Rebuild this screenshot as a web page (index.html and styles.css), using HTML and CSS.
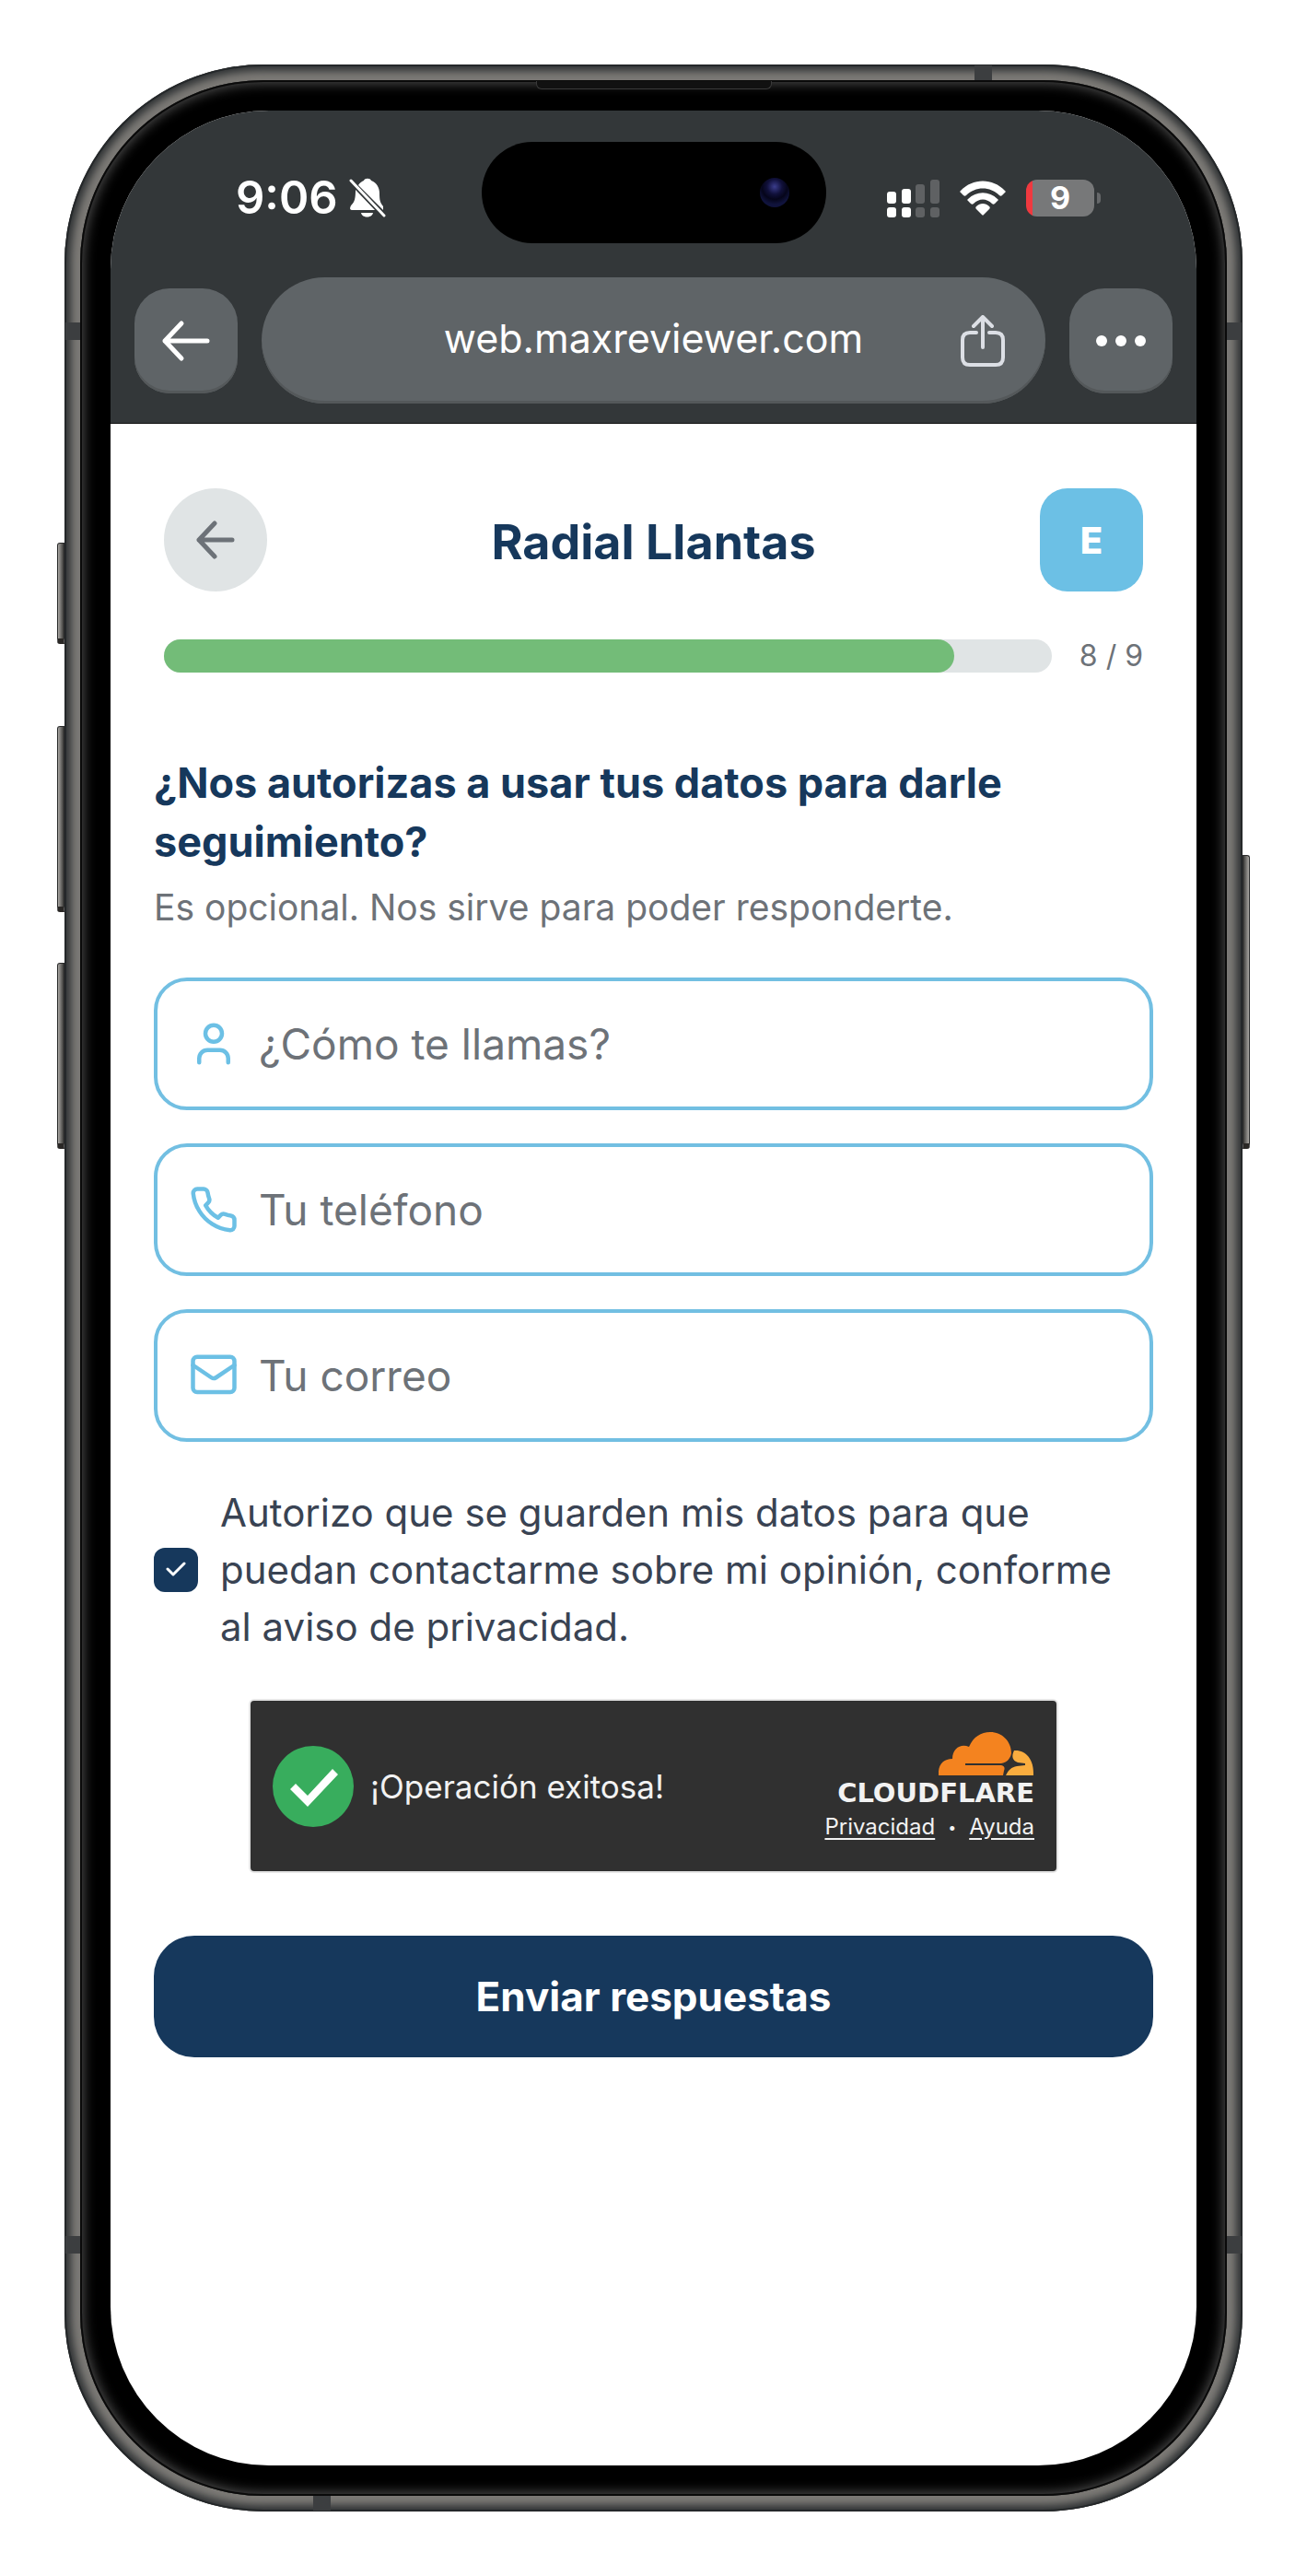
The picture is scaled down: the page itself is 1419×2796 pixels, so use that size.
FILE: index.html
```html
<!DOCTYPE html>
<html lang="es">
<head>
  <meta charset="UTF-8" />
  <meta name="viewport" content="width=device-width, initial-scale=1.0"/>
  <title>Radial Llantas</title>
  <link rel="stylesheet" href="styles.css">
</head>
<body>

  <div class="phone">

    <!-- Side buttons and antenna bands -->
    <span class="key key-action"></span>
    <span class="key key-up"></span>
    <span class="key key-down"></span>
    <span class="key key-power"></span>
    <span class="band band-top"></span>
    <span class="band band-bottom"></span>
    <span class="band band-left"></span>
    <span class="band band-right"></span>
    <span class="band band-left band-low"></span>
    <span class="band band-right band-low"></span>

    <div class="bezel">
      <span class="speaker"></span>

      <div class="screen">

        <div class="browser">

          <div class="status-bar">
            <div class="status-left">
              <span class="time">9:06</span>
              <svg width="40" height="44" viewBox="0 0 40 44" fill="#fff">
                <path d="M10 8 C12 5 14 4 16 3 C17 0 23 0 24 3 C30 5 33 11 33 17 C33 25 34 27 37 31 V35 Z"/>
                <path d="M7 13 L28 35 H3 C0 35 1 31 3 29 C6 26 7 22 7 13 Z"/>
                <path d="M13 38 H26 C25 44 14 44 13 38 Z"/>
                <path d="M2 3 L38 41" stroke="#fff" stroke-width="3" stroke-linecap="round"/>
              </svg>
            </div>

            <div class="island"><span class="camera"></span></div>

            <div class="status-right">
              <svg width="57" height="41" viewBox="0 0 57 41" fill="#fff">
                <rect x="0" y="13" width="10" height="13" rx="3"/>
                <rect x="16" y="10" width="10" height="16" rx="3"/>
                <rect x="31" y="5" width="10" height="21" rx="3" fill="#5f6163"/>
                <rect x="47" y="0" width="10" height="26" rx="3" fill="#5f6163"/>
                <rect x="0" y="30" width="10" height="11" rx="3"/>
                <rect x="16" y="30" width="10" height="11" rx="3"/>
                <rect x="31" y="30" width="10" height="11" rx="3" fill="#5f6163"/>
                <rect x="47" y="30" width="10" height="11" rx="3" fill="#5f6163"/>
              </svg>
              <svg width="50" height="38" viewBox="0 0 50 38" fill="#fff">
                <path d="M1 11 C14 -3 36 -3 49 11 C50 12 50 12 49 13 L46 16 C45 17 44 17 43 16 C33 6 17 6 7 16 C6 17 5 17 4 16 L1 13 C0 12 0 12 1 11 Z"/>
                <path d="M9 20 C18 11 32 11 41 20 C42 21 42 21 41 22 L38 25 C37 26 36 26 35 25 C29 19 21 19 15 25 C14 26 13 26 12 25 L9 22 C8 21 8 21 9 20 Z"/>
                <path d="M18 28 C22 24 28 24 32 28 C33 29 33 30 32 31 L26 37 C25 38 25 38 24 37 L18 31 C17 30 17 29 18 28 Z"/>
              </svg>
              <div class="battery"><span>9</span></div>
            </div>
          </div>

          <div class="toolbar">
            <button class="tool-btn" aria-label="Atrás">
              <svg width="54" height="46" viewBox="0 0 54 46" fill="none" stroke="#fff" stroke-width="5" stroke-linecap="round" stroke-linejoin="round">
                <path d="M22 4 L4 23 L22 42 M4 23 H50"/>
              </svg>
            </button>
            <div class="address">
              <input type="text" value="web.maxreviewer.com" aria-label="Dirección">
              <button class="share" aria-label="Compartir">
                <svg width="48" height="56" viewBox="0 0 48 56" fill="none" stroke="#dcdfe5" stroke-width="4" stroke-linecap="round" stroke-linejoin="round">
                  <path d="M17 19 H10 Q2 19 2 27 V46 Q2 54 10 54 H38 Q46 54 46 46 V27 Q46 19 38 19 H31"/>
                  <path d="M24 35 V2 M14 12 L24 2 L34 12"/>
                </svg>
              </button>
            </div>
            <button class="tool-btn" aria-label="Más">
              <svg width="54" height="12" viewBox="0 0 54 12" fill="#fff">
                <circle cx="6" cy="6" r="6"/>
                <circle cx="27" cy="6" r="6"/>
                <circle cx="48" cy="6" r="6"/>
              </svg>
            </button>
          </div>

        </div>

        <main class="survey">

          <header class="survey-header">
            <button class="back-btn" aria-label="Volver">
              <svg width="44" height="42" viewBox="0 0 44 42" fill="none" stroke="#6d7278" stroke-width="5" stroke-linecap="round" stroke-linejoin="round">
                <path d="M21 3 L4 21 L21 39 M4 21 H40"/>
              </svg>
            </button>
            <h1>Radial Llantas</h1>
            <span class="badge">E</span>
          </header>

          <div class="progress-row">
            <div class="progress"><div class="progress-fill" style="width: 89%"></div></div>
            <span>8 / 9</span>
          </div>

          <form>
            <h2>¿Nos autorizas a usar tus datos para darle seguimiento?</h2>
            <p class="hint">Es opcional. Nos sirve para poder responderte.</p>

            <div class="fields">
              <label class="field">
                <svg class="icon" viewBox="0 0 24 24">
                  <circle cx="12" cy="7" r="4"/>
                  <path d="M19 21v-2a4 4 0 0 0-4-4H9a4 4 0 0 0-4 4v2"/>
                </svg>
                <input type="text" placeholder="¿Cómo te llamas?" aria-label="Nombre">
              </label>
              <label class="field">
                <svg class="icon" viewBox="0 0 24 24">
                  <path d="M22 16.92v3a2 2 0 0 1-2.18 2 19.79 19.79 0 0 1-8.63-3.07 19.5 19.5 0 0 1-6-6 19.79 19.79 0 0 1-3.07-8.67A2 2 0 0 1 4.11 2h3a2 2 0 0 1 2 1.72 12.84 12.84 0 0 0 .7 2.81 2 2 0 0 1-.45 2.11L8.09 9.91a16 16 0 0 0 6 6l1.27-1.27a2 2 0 0 1 2.11-.45 12.84 12.84 0 0 0 2.81.7A2 2 0 0 1 22 16.92z"/>
                </svg>
                <input type="tel" placeholder="Tu teléfono" aria-label="Teléfono">
              </label>
              <label class="field">
                <svg class="icon" viewBox="0 0 24 24">
                  <rect x="2" y="3" width="20" height="17" rx="2"/>
                  <path d="M2 7l8.9 6a2 2 0 0 0 2.2 0L22 7"/>
                </svg>
                <input type="email" placeholder="Tu correo" aria-label="Correo">
              </label>
            </div>

            <div class="consent">
              <div class="check">
                <input type="checkbox" id="consent" checked>
                <svg width="22" height="16" viewBox="0 0 22 16" fill="none" stroke="#fff" stroke-width="3" stroke-linecap="round" stroke-linejoin="round">
                  <path d="M2 8 L8 14 L20 2"/>
                </svg>
              </div>
              <label for="consent">Autorizo que se guarden mis datos para que puedan contactarme sobre mi opinión, conforme al aviso de privacidad.</label>
            </div>

            <div class="captcha">
              <svg width="88" height="88" viewBox="0 0 88 88">
                <circle cx="44" cy="44" r="44" fill="#38ad5d"/>
                <path d="M65 25 L71 31 L38 66 L19 47 L25 41 L38 54 Z" fill="#fff"/>
              </svg>
              <span class="captcha-text">¡Operación exitosa!</span>
              <div class="captcha-brand">
                <svg width="104" height="48" viewBox="0 0 104 48">
                  <path fill="#f4831f" d="M0 47 C-1 36 5 29 15 29 C15 17 25 12 33 16 C38 5 46 0 56 0 C69 0 79 10 79 23 C78 29 74 33 68 34 H29 V36 H68 Q73 37 71 42 L70 47 Z"/>
                  <path fill="#faad3f" d="M82 20 C94 19 104 29 103 47 H73 C76 41 79 38 85 37 L94 36 V34 L86 33 C80 31 79 26 82 20 Z"/>
                </svg>
                <span class="wordmark">CLOUDFLARE</span>
                <div class="captcha-links">
                  <a href="#">Privacidad</a><span>•</span><a href="#">Ayuda</a>
                </div>
              </div>
            </div>

            <button type="submit" class="submit-btn">Enviar respuestas</button>
          </form>

        </main>

      </div>
    </div>
  </div>

</body>
</html>
```
FILE: styles.css
```css
* {
  margin: 0;
  padding: 0;
  box-sizing: border-box;
}

body {
  display: flex;
  min-height: 100vh;
  padding: 70px;
  font-family: Inter, sans-serif;
  background-color: #fff;
}

button,
input {
  font-family: inherit;
  border: none;
  background: none;
}

svg {
  display: block;
  flex-shrink: 0;
}

/* Phone body */

.phone {
  position: relative;
  display: flex;
  flex: 1;
  min-width: 0;
  padding: 17px;
  border-radius: 216px;
  background-color: #7c7a76;
  box-shadow: inset 0 0 0 2px #25282a, inset 0 0 8px 7px #303335;
}

.bezel {
  position: relative;
  display: flex;
  flex: 1;
  min-width: 0;
  padding: 33px;
  border-radius: 199px;
  background-color: #000;
  box-shadow: inset 0 0 0 2px #0a0a0a, inset 0 0 14px 3px #555;
}

.screen {
  flex: 1;
  min-width: 0;
  overflow: hidden;
  border-radius: 172px;
  background-color: #fff;
}

.key {
  position: absolute;
  left: -8px;
  width: 8px;
  border: 1px solid #2a2b2b;
  border-bottom: 6px solid #2a2826;
  border-radius: 3px 0 0 3px;
  background: linear-gradient(to right, #aaa8a4, #3c3b39);
}

.key-action {
  top: 519px;
  height: 110px;
}

.key-up {
  top: 718px;
  height: 202px;
}

.key-down {
  top: 975px;
  height: 202px;
}

.key-power {
  top: 858px;
  left: auto;
  right: -8px;
  height: 319px;
  border-radius: 0 3px 3px 0;
  background: linear-gradient(to left, #aaa8a4, #3c3b39);
}

.band {
  position: absolute;
  width: 16px;
  height: 19px;
  background-color: #3c3e40;
}

.band-left {
  top: 280px;
  left: 1px;
}

.band-right {
  top: 280px;
  right: 1px;
}

.band-low {
  top: auto;
  bottom: 280px;
}

.band-top {
  top: 1px;
  right: 272px;
  width: 19px;
  height: 16px;
}

.band-bottom {
  bottom: 1px;
  left: 270px;
  width: 19px;
  height: 16px;
}

.speaker {
  position: absolute;
  top: 1px;
  left: 50%;
  width: 256px;
  height: 9px;
  margin-left: -128px;
  border: 1px solid #3a3a3a;
  border-top: none;
  border-radius: 0 0 6px 6px;
  background-color: #111;
}

/* Browser chrome */

.browser {
  padding: 34px 26px 21px;
  color: #fff;
  background-color: #333739;
  border-bottom: 1px solid #111;
}

.status-bar {
  display: grid;
  grid-template-columns: 1fr auto 1fr;
  align-items: center;
}

.status-left,
.status-right {
  display: flex;
  align-items: center;
  padding-top: 12px;
}

.status-left {
  gap: 12px;
  padding-left: 110px;
}

.status-right {
  justify-content: flex-end;
  gap: 22px;
  padding-right: 78px;
}

.time {
  font-size: 49px;
  font-weight: 600;
  line-height: 44px;
}

.island {
  display: flex;
  align-items: center;
  justify-content: flex-end;
  width: 374px;
  height: 110px;
  padding-right: 40px;
  border-radius: 55px;
  background-color: #000;
}

.camera {
  width: 32px;
  height: 32px;
  border-radius: 50%;
  background: radial-gradient(circle at 50% 30%, #3b3d8c 0, #10103a 30%, #05051a 50%, #10133c 70%);
}

.battery {
  position: relative;
  width: 74px;
  height: 40px;
  margin-right: 7px;
  border-radius: 12px;
  font-size: 34px;
  font-weight: 700;
  line-height: 40px;
  text-align: center;
  background: linear-gradient(to right, #f0393f 7px, #777879 7px);
}

.battery::after {
  content: "";
  position: absolute;
  top: 14px;
  right: -7px;
  width: 4px;
  height: 12px;
  border-radius: 0 4px 4px 0;
  background-color: #66686a;
}

.toolbar {
  display: flex;
  align-items: center;
  gap: 26px;
  margin-top: 37px;
}

.tool-btn {
  display: flex;
  align-items: center;
  justify-content: center;
  width: 112px;
  height: 114px;
  border-radius: 38px;
  background-color: #5f6467;
  box-shadow: inset 0 -3px 0 #54585a;
}

.address {
  display: flex;
  flex: 1;
  align-items: center;
  min-width: 0;
  height: 137px;
  padding: 0 44px 0 92px;
  border-radius: 69px;
  background-color: #5f6467;
  box-shadow: inset 0 -3px 0 #54585a;
}

.address input {
  flex: 1;
  min-width: 0;
  padding-bottom: 6px;
  font-size: 43px;
  text-align: center;
  color: #fff;
}

/* Survey */

.survey {
  padding: 70px 47px;
  color: #16385c;
}

.survey-header {
  display: flex;
  align-items: center;
  justify-content: space-between;
  padding: 0 11px;
}

.survey-header h1 {
  padding-top: 4px;
  font-size: 52px;
  font-weight: 700;
}

.back-btn,
.badge {
  display: flex;
  align-items: center;
  justify-content: center;
  width: 112px;
  height: 112px;
}

.back-btn {
  border-radius: 50%;
  background-color: #e0e4e5;
}

.badge {
  border-radius: 30px;
  font-size: 40px;
  font-weight: 800;
  color: #fff;
  background-color: #6cc0e5;
}

.progress-row {
  display: flex;
  align-items: center;
  gap: 30px;
  margin-top: 52px;
  padding: 0 11px;
  font-size: 32px;
  line-height: 36px;
  color: #6d7278;
}

.progress {
  flex: 1;
  height: 36px;
  border-radius: 18px;
  background-color: #e0e4e5;
}

.progress-fill {
  height: 100%;
  border-radius: 18px;
  background-color: #73bc78;
}

form h2 {
  margin-top: 88px;
  font-size: 45px;
  font-weight: 700;
  line-height: 64px;
}

.hint {
  margin-top: 11px;
  font-size: 39px;
  line-height: 56px;
  color: #6d7278;
}

.fields {
  display: flex;
  flex-direction: column;
  gap: 36px;
  margin-top: 48px;
}

.field {
  display: flex;
  align-items: center;
  gap: 22px;
  height: 144px;
  padding: 0 34px;
  border: 4px solid #72bfe2;
  border-radius: 36px;
}

.icon {
  width: 54px;
  height: 54px;
  fill: none;
  stroke: #6cc0e5;
  stroke-width: 2;
  stroke-linecap: round;
  stroke-linejoin: round;
}

.field input {
  flex: 1;
  min-width: 0;
  font-size: 46px;
  color: #394353;
  outline: none;
}

.field input::placeholder {
  color: #6d7278;
}

.consent {
  display: flex;
  align-items: center;
  gap: 24px;
  margin-top: 46px;
  font-size: 42px;
  line-height: 62px;
  color: #394353;
}

.check {
  position: relative;
  height: 48px;
}

.check input {
  display: block;
  appearance: none;
  width: 48px;
  height: 48px;
  border-radius: 12px;
  background-color: #16385c;
}

.check svg {
  position: absolute;
  top: 15px;
  left: 13px;
  pointer-events: none;
}

.captcha {
  display: flex;
  align-items: center;
  max-width: 875px;
  height: 185px;
  margin: 49px auto 0;
  padding: 0 24px;
  border-radius: 4px;
  color: #f2f2f2;
  background-color: #303030;
  box-shadow: 0 0 0 2px #e6e6e6;
}

.captcha-text {
  margin-left: 18px;
  font-size: 35px;
}

.captcha-brand {
  display: flex;
  flex-direction: column;
  align-items: flex-end;
  margin-left: auto;
}

.wordmark {
  margin-top: 4px;
  font-family: "DejaVu Sans", sans-serif;
  font-size: 29px;
  font-weight: 700;
  line-height: 28px;
}

.captcha-links {
  display: flex;
  gap: 14px;
  margin-top: 8px;
  font-size: 24px;
  line-height: 30px;
}

.captcha-links span {
  font-size: 16px;
}

.captcha-links a {
  color: #f2f2f2;
  text-underline-offset: 4px;
}

.submit-btn {
  display: block;
  width: 100%;
  height: 132px;
  margin-top: 70px;
  border-radius: 44px;
  font-size: 44px;
  font-weight: 700;
  color: #fff;
  background-color: #16385c;
}
```
